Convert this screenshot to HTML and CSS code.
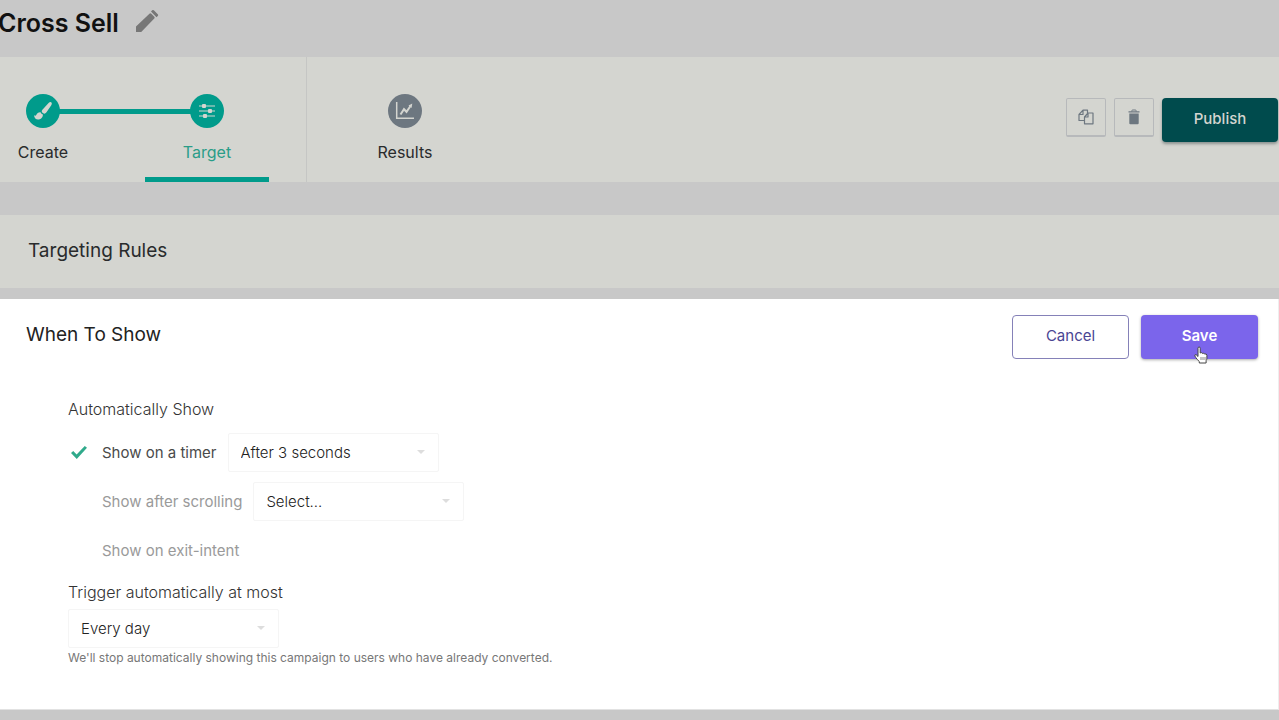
FILE: index.html
```html
<!DOCTYPE html>
<html lang="en">
<head>
<meta charset="utf-8">
<title>Cross Sell</title>
<link rel="stylesheet" href="styles.css">
</head>
<body>
<header class="page-header">
  <h1 class="page-title">Cross Sell</h1>
  <button class="edit" type="button" aria-label="Rename campaign">
    <svg width="24" height="24" viewBox="0 0 24 24" fill="currentColor"><path d="M1 23V17.500L14.700 4.500Q15.500 4 16.300 4.700L19.500 8Q20 8.800 19.300 9.600L6.200 23ZM17.200 1.300Q18 .6 18.800 1.300L23 5.500Q23.500 6.300 22.800 7L21.500 8.200L16 2.500Z"/></svg>
  </button>
</header>

<nav class="toolbar" aria-label="Campaign steps">
  <div class="steps">
    <a class="step step-linked" href="#create">
      <span class="dot"><svg width="20" height="20" viewBox="0 0 20 20" fill="currentColor"><path d="M18.200 1.300C19.300 2.200 18.700 3.500 18.100 4.500L13.300 11.500Q12 13.300 10.200 12.300L9 11.300Q8.200 10.100 9.400 8.700L15.600 2.100Q17 .6 18.200 1.300ZM7.700 11.400Q8.200 12.900 9.900 13.600C10 16.600 7.900 18.500 5.200 18.600C2.900 18.700 1.300 17 1 14.300Q2.700 15.200 3.400 13.700C4.100 12.200 5.700 11.100 7.700 11.400Z"/></svg></span>
      <span class="step-label">Create</span>
    </a>
    <a class="step step-current" href="#target" aria-current="step">
      <span class="dot"><svg width="18" height="18" viewBox="0 0 18 18" fill="currentColor"><path d="M1 3.400H17V4.600H1ZM1 8.400H17V9.600H1ZM1 13.400H17V14.600H1Z"/><rect x="4" y="2" width="4" height="4" rx="1"/><rect x="10" y="7" width="4" height="4" rx="1"/><rect x="5" y="12" width="4" height="4" rx="1"/></svg></span>
      <span class="step-label">Target</span>
    </a>
  </div>
  <div class="results">
    <a class="step step-idle" href="#results">
      <span class="dot"><svg width="20" height="20" viewBox="0 0 20 20" fill="none" stroke="currentColor"><path d="M1.700 1V17.300H19" stroke-width="1.500"/><path d="M5.500 13.500L9 8.200L11.500 10.800L15.500 5" stroke-width="2"/><path d="M13.500 4.500L17.300 2.500L16.500 7Z" fill="currentColor" stroke="none"/></svg></span>
      <span class="step-label">Results</span>
    </a>
  </div>
  <div class="actions">
    <button class="icon-button" type="button" aria-label="Duplicate">
      <svg width="16" height="16" viewBox="0 0 16 16" fill="none" stroke="currentColor" stroke-width="1.200" stroke-linejoin="round"><path d="M6 11.500H1V5.500L5 1.200H9.500V4M5 1.200V5.500H1M6.500 8L10 4H15V14.800H6.500ZM10 4V8H6.500"/></svg>
    </button>
    <button class="icon-button" type="button" aria-label="Delete">
      <svg width="12" height="16" viewBox="0 0 12 16" fill="currentColor"><path d="M1.300 4.500H10.700V14.200Q10.700 15.300 9.600 15.300H2.400Q1.300 15.300 1.300 14.200ZM.5 2.300H11.500V3.600H.5Z"/><path d="M3.800 2.600V1.800Q3.800 1 4.700 1H7.300Q8.200 1 8.200 1.800V2.600" fill="none" stroke="currentColor"/></svg>
    </button>
    <button class="publish" type="button">Publish</button>
  </div>
</nav>

<main>
  <section class="rules"><h2 class="section-title">Targeting Rules</h2></section>
  <form class="panel">
    <div class="panel-head">
      <h2 class="section-title panel-title">When To Show</h2>
      <div class="panel-actions">
        <button class="button cancel" type="button">Cancel</button>
        <button class="button save" type="button">Save
          <svg class="pointer" width="16" height="18" viewBox="0 0 16 18" fill="#fff" stroke="#444" stroke-linejoin="round"><path d="M5 10.500V2.300Q5 1 6.100 1T7.200 2.300V7Q8.500 6 9.300 7.400Q10.800 6.600 11.400 8Q13.600 7.300 13.900 9.300V12.200Q13.900 13.600 13.100 14.600V17H6.300V15.500Q4 13.600 2.800 11.500Q1 9.400 2 8.800Q3.200 8.200 5 10.500Z"/><path d="M8 11V14M10 11V14M12 11V14" stroke="#888"/></svg>
        </button>
      </div>
    </div>
    <fieldset class="triggers">
      <legend class="field-title">Automatically Show</legend>
      <div class="trigger">
        <input class="tick" type="checkbox" id="timer" checked>
        <label class="trigger-label" for="timer">Show on a timer</label>
        <span class="drop"><select class="choice" aria-label="Timer delay"><option>After 3 seconds</option></select></span>
      </div>
      <div class="trigger">
        <input class="tick" type="checkbox" id="scrolling">
        <label class="trigger-label" for="scrolling">Show after scrolling</label>
        <span class="drop"><select class="choice" aria-label="Scroll depth"><option>Select...</option></select></span>
      </div>
      <div class="trigger">
        <input class="tick" type="checkbox" id="exit">
        <label class="trigger-label" for="exit">Show on exit-intent</label>
      </div>
    </fieldset>
    <div class="frequency">
      <label class="field-title" for="frequency">Trigger automatically at most</label>
      <span class="drop"><select class="choice" id="frequency"><option>Every day</option></select></span>
      <p class="hint">We'll stop automatically showing this campaign to users who have already converted.</p>
    </div>
  </form>
</main>
</body>
</html>
```
FILE: styles.css
```css
* { box-sizing: border-box; }

body {
  margin: 0;
  background: #c8c8c8;
  color: #292b2c;
  font: 16px/24px Inter, "Liberation Sans", sans-serif;
}

h1, h2, p { margin: 0; }
button { font: inherit; cursor: pointer; }

.page-header {
  display: flex;
  align-items: flex-start;
  gap: 16px;
  height: 57px;
  padding-top: 7px;
  margin-left: -2px;
}
.page-title { font-size: 25px; line-height: 32px; font-weight: 600; color: #111; }
.edit { display: flex; padding: 2px 0; border: 0; background: none; color: #777; }

.toolbar { display: flex; height: 125px; background: #d4d5d0; }
.steps {
  display: flex;
  gap: 40px;
  margin-left: -19px;
  padding-right: 37px;
  border-right: 1px solid #c5c6c4;
}
.results { display: flex; padding-left: 36px; }
.step {
  position: relative;
  display: flex;
  flex-direction: column;
  align-items: center;
  gap: 12px;
  width: 124px;
  padding-top: 37px;
  color: #292b2c;
  text-decoration: none;
}
.step-linked::before {
  content: "";
  position: absolute;
  top: 52px;
  left: 50%;
  width: 164px;
  height: 5px;
  background: #009b8b;
}
.step-current { color: #2a9d88; border-bottom: 5px solid #009b8b; }
.dot {
  position: relative;
  z-index: 1;
  display: grid;
  place-items: center;
  width: 34px;
  height: 34px;
  border-radius: 50%;
  background: #009b8b;
  color: #d4d5d0;
}
.step-idle .dot { background: #6d7780; }

.actions { display: flex; align-items: flex-start; gap: 8px; margin-left: auto; padding: 41px 1px 0 0; }
.icon-button {
  display: grid;
  place-items: center;
  width: 40px;
  height: 39px;
  padding: 0;
  border: 1px solid #b7b9bb;
  border-bottom-width: 2px;
  border-radius: 2px;
  background: #d4d5d0;
  color: #6d7780;
}
.publish {
  width: 116px;
  height: 44px;
  padding: 0 0 2px;
  border: 0;
  border-radius: 4px;
  background: #004b4d;
  color: #d4d5d0;
  font-size: 15px;
  font-weight: 500;
  box-shadow: 0 2px 3px #8b9290;
}

.rules { margin-top: 33px; padding: 24px 28px 25px; background: #d4d5d0; }
.section-title { font-size: 19px; line-height: 24px; font-weight: 400; }

.panel {
  margin-top: 11px;
  padding: 16px 20px 41px 26px;
  background: #fff;
  border-right: 1px solid #eee;
  border-bottom: 1px solid #e2e2e2;
}
.panel-head { display: flex; justify-content: space-between; align-items: flex-start; }
.panel-title { padding-top: 8px; color: #222; }
.panel-actions { display: flex; gap: 12px; }
.button { position: relative; width: 117px; height: 44px; padding: 0 0 2px; border-radius: 4px; font-size: 15px; }
.cancel { border: 1px solid #8581b8; background: #fff; color: #4a4593; }
.save { border: 0; background: #7b65eb; color: #fff; font-weight: 600; box-shadow: 0 1px 3px #aaa; }
.pointer { position: absolute; top: 31px; left: 52px; }

.triggers { margin: 38px 0 0 42px; padding: 0; border: 0; }
.field-title { display: block; padding: 0; font-size: 16px; line-height: 24px; font-weight: 300; color: #333; }
.triggers .field-title { margin-bottom: 7px; }
.trigger { display: flex; align-items: center; height: 49px; }
.trigger-label { margin-right: 11px; font-size: 15px; color: #9a9a9a; }
.tick { appearance: none; display: grid; place-items: center; width: 22px; height: 22px; margin: 0 12px 0 0; }
.tick:checked::before {
  content: "";
  width: 16px;
  height: 13px;
  background: #30aa8b;
  clip-path: polygon(0 53%, 14% 38%, 35% 65%, 86% 0, 100% 14%, 36% 100%);
}
.tick:checked + .trigger-label { color: #4a4a4a; }

.drop { position: relative; display: inline-flex; }
.drop::after {
  content: "";
  position: absolute;
  top: 17px;
  right: 14px;
  border: 4px solid transparent;
  border-top-color: #ddd;
  pointer-events: none;
}
.choice {
  appearance: none;
  width: 211px;
  height: 39px;
  padding: 0 28px 0 12px;
  border: 1px solid #f5f5f5;
  border-radius: 2px;
  background: #fff;
  color: #222;
  font: inherit;
  font-size: 15px;
  font-weight: 300;
}

.frequency { display: flex; flex-direction: column; align-items: flex-start; margin: 5px 0 0 42px; }
.frequency .drop { margin-top: 5px; }
.hint { font-size: 12px; line-height: 20px; color: #777; }
```
